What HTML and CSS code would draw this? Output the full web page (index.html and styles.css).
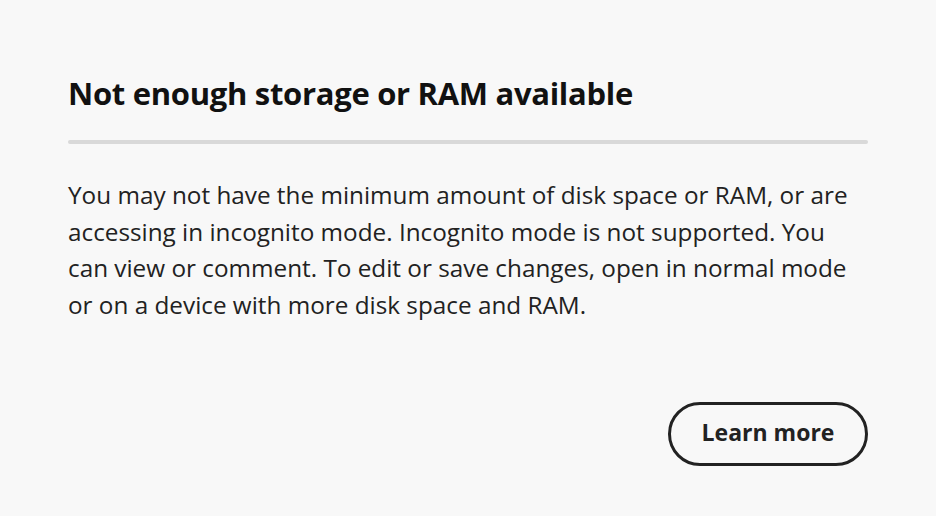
FILE: index.html
```html
<!DOCTYPE html>
<html lang="en">
<head>
<meta charset="utf-8">
<title>Not enough storage or RAM available</title>
<link rel="stylesheet" href="styles.css">
</head>
<body>
<section class="dialog" role="alertdialog" aria-labelledby="dlg-title">
  <h2 class="dialog-title" id="dlg-title">Not enough storage or RAM available</h2>
  <hr class="dialog-divider">
  <p class="dialog-body">You may not have the minimum amount of disk space or RAM, or are accessing in incognito mode. Incognito mode is not supported. You can view or comment. To edit or save changes, open in normal mode or on a device with more disk space and RAM.</p>
  <div class="dialog-actions">
    <button class="btn-outline" type="button">Learn more</button>
  </div>
</section>
</body>
</html>
```
FILE: styles.css
```css
html, body {
  margin: 0;
  padding: 0;
  background: #f8f8f8;
}
body {
  font-family: "Open Sans", "Noto Sans", sans-serif;
  color: #222222;
  width: 936px;
  height: 516px;
  overflow: hidden;
}
.dialog {
  box-sizing: border-box;
  padding: 71px 68px 0 68px;
  display: flex;
  flex-direction: column;
}
.dialog-title {
  margin: 0;
  font-size: 31px;
  font-weight: 700;
  line-height: 44px;
  color: #111111;
  letter-spacing: -0.3px;
}
.dialog-divider {
  margin: 25px 0 0 0;
  border: 0;
  height: 4px;
  background: #d9d9d9;
  border-radius: 2px;
}
.dialog-body {
  margin: 33px 0 0 0;
  font-size: 24.3px;
  line-height: 36.7px;
  color: #222222;
}
.dialog-actions {
  display: flex;
  justify-content: flex-end;
  margin-top: 78px;
}
.btn-outline {
  box-sizing: border-box;
  width: 200px;
  height: 64px;
  border: 3.5px solid #222222;
  border-radius: 32px;
  background: transparent;
  font-family: inherit;
  font-size: 23px;
  font-weight: 700;
  color: #222222;
  padding: 0 0 4px 0;
}
```
